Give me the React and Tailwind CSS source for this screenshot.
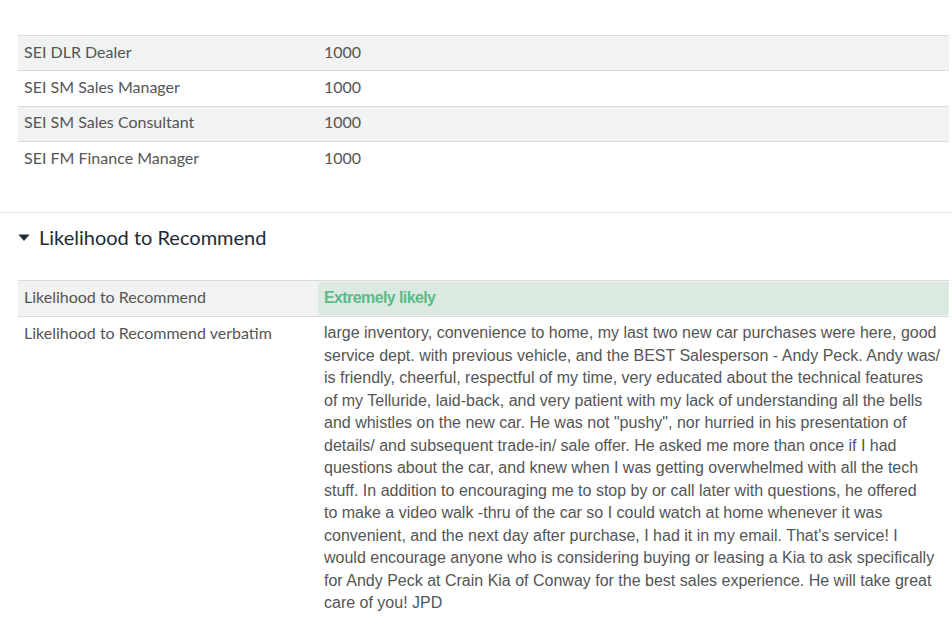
const scores = [
  { label: 'SEI DLR Dealer', value: '1000' },
  { label: 'SEI SM Sales Manager', value: '1000' },
  { label: 'SEI SM Sales Consultant', value: '1000' },
  { label: 'SEI FM Finance Manager', value: '1000' },
];

const verbatimLines = [
  'large inventory, convenience to home, my last two new car purchases were here, good',
  'service dept. with previous vehicle, and the BEST Salesperson - Andy Peck. Andy was/',
  'is friendly, cheerful, respectful of my time, very educated about the technical features',
  'of my Telluride, laid-back, and very patient with my lack of understanding all the bells',
  'and whistles on the new car. He was not "pushy", nor hurried in his presentation of',
  'details/ and subsequent trade-in/ sale offer. He asked me more than once if I had',
  'questions about the car, and knew when I was getting overwhelmed with all the tech',
  'stuff. In addition to encouraging me to stop by or call later with questions, he offered',
  'to make a video walk -thru of the car so I could watch at home whenever it was',
  "convenient, and the next day after purchase, I had it in my email. That's service! I",
  'would encourage anyone who is considering buying or leasing a Kia to ask specifically',
  'for Andy Peck at Crain Kia of Conway for the best sales experience. He will take great',
  'care of you! JPD',
];

export default function App() {
  return (
    <div className="w-[952px] h-[641px] overflow-hidden bg-white font-['Lato',sans-serif] text-[16px] text-[#555]">
      <div className="pt-[35px] pl-[18px] pr-[3px]">
        <div className="border-t border-[#dadada]">
          {scores.map((s, i) => (
            <div
              key={s.label}
              className={`flex h-[35.3px] items-center pb-[3px] ${i < scores.length - 1 ? 'border-b border-[#dadada]' : ''} ${i % 2 === 0 ? 'bg-[#f1f2f2]' : 'bg-white'}`}
            >
              <div className="w-[300px] px-[6px]">{s.label}</div>
              <div className="px-[6px]">{s.value}</div>
            </div>
          ))}
        </div>
      </div>

      <div className="mt-[35px] border-t border-[#e3e3e3]">
        <div className="flex items-center gap-[9px] pl-[18px] pt-[9px] text-[20px] text-[#1e2a36]">
          <svg width="12" height="8" viewBox="0 0 12 8" className="mt-[1px]">
            <path d="M0.5 0.5 L11.5 0.5 L6 7 Z" fill="#1e2a36" />
          </svg>
          <span>Likelihood to Recommend</span>
        </div>

        <div className="mt-[28px] pl-[18px] pr-[3px]">
          <div className="border-t border-[#dadada]">
            <div className="flex h-[36px] items-stretch border-b border-[#dadada] bg-[#f1f2f2]">
              <div className="flex w-[300px] items-center px-[6px] pb-[3px]">Likelihood to Recommend</div>
              <div className="my-[1px] flex flex-1 items-center rounded-[4px] bg-[#dbe9e1] px-[6px] pb-[2px] font-['Liberation_Sans',sans-serif] text-[16px] font-bold tracking-[-0.6px] text-[#5cb98a]">
                Extremely likely
              </div>
            </div>
            <div className="flex pt-[5px]">
              <div className="w-[300px] shrink-0 px-[6px] leading-[22.5px]">Likelihood to Recommend verbatim</div>
              <div className="flex-1 px-[6px] font-['Liberation_Sans',sans-serif] text-[16px] leading-[22.5px] text-[#555]">
                {verbatimLines.map((line, i) => (
                  <div key={i} className="whitespace-nowrap">{line}</div>
                ))}
              </div>
            </div>
          </div>
        </div>
      </div>
    </div>
  );
}
